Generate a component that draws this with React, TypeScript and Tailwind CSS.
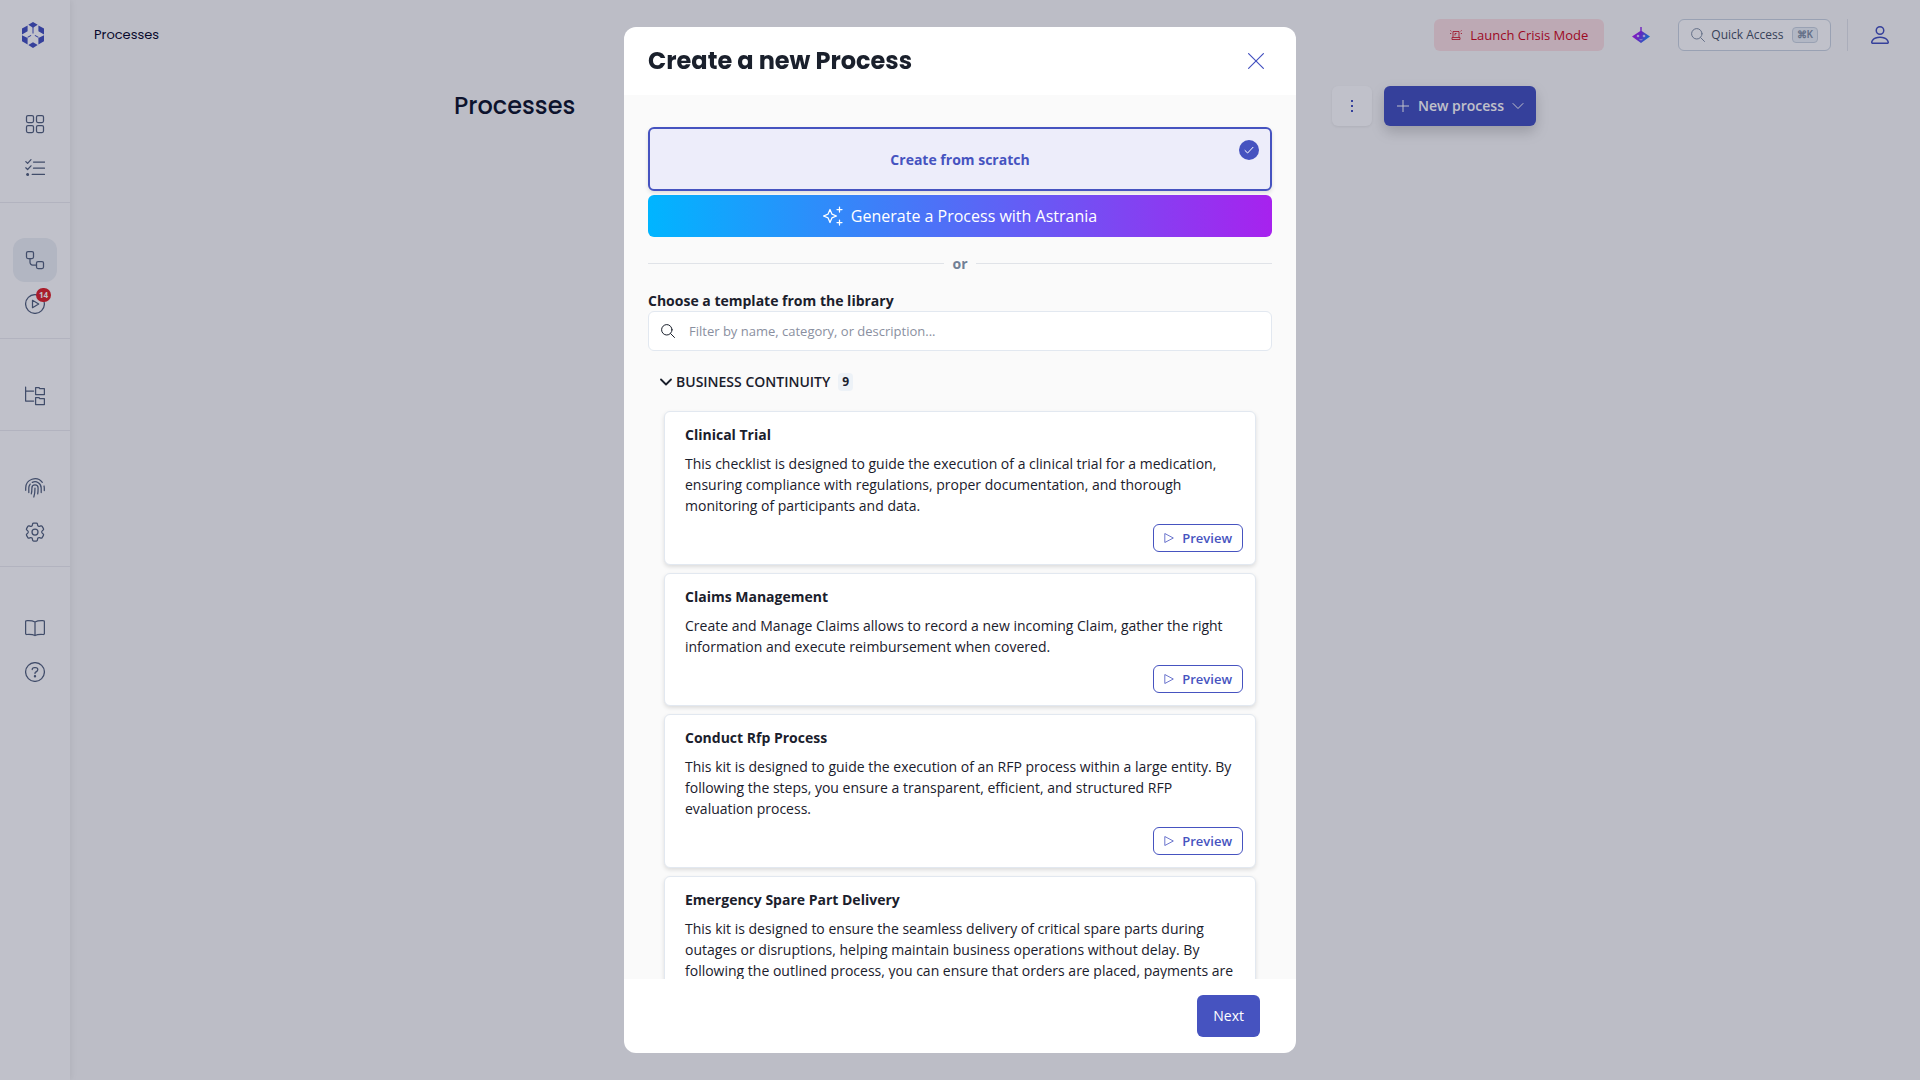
import { useState } from "react";
import type { ReactNode } from "react";
import { BsPerson } from "react-icons/bs";
import { HiOutlineCog6Tooth } from "react-icons/hi2";

interface Template {
    id: string;
    title: string;
    description: string;
}

interface NavItem {
    label: string;
    icon: ReactNode;
    active?: boolean;
    badge?: number;
}

const TEMPLATES: Template[] = [
    {
        id: "clinical-trial",
        title: "Clinical Trial",
        description:
            "This checklist is designed to guide the execution of a clinical trial for a medication, ensuring compliance with regulations, proper documentation, and thorough monitoring of participants and data.",
    },
    {
        id: "claims-management",
        title: "Claims Management",
        description:
            "Create and Manage Claims allows to record a new incoming Claim, gather the right information and execute reimbursement when covered.",
    },
    {
        id: "conduct-rfp",
        title: "Conduct Rfp Process",
        description:
            "This kit is designed to guide the execution of an RFP process within a large entity. By following the steps, you ensure a transparent, efficient, and structured RFP evaluation process.",
    },
    {
        id: "spare-part",
        title: "Emergency Spare Part Delivery",
        description:
            "This kit is designed to ensure the seamless delivery of critical spare parts during outages or disruptions, helping maintain business operations without delay. By following the outlined process, you can ensure that orders are placed, payments are",
    },
];

// Thin line icon on a 20px grid
function LineIcon({ children, className = "size-5" }: { children: ReactNode; className?: string }) {
    return (
        <svg
            viewBox="0 0 20 20"
            className={className}
            fill="none"
            stroke="currentColor"
            strokeWidth="1.25"
            strokeLinecap="round"
            strokeLinejoin="round"
            aria-hidden="true"
        >
            {children}
        </svg>
    );
}

const NAV_GROUPS: NavItem[][] = [
    [
        {
            label: "Dashboard",
            icon: (
                <LineIcon>
                    <rect x="1.5" y="1.5" width="7" height="7" rx="1.5" />
                    <rect x="11.5" y="1.5" width="7" height="7" rx="1.5" />
                    <rect x="1.5" y="11.5" width="7" height="7" rx="1.5" />
                    <rect x="11.5" y="11.5" width="7" height="7" rx="1.5" />
                </LineIcon>
            ),
        },
        {
            label: "Tasks",
            icon: (
                <LineIcon>
                    <path d="M.8 3.6l1.8 1.7L6 1.6M.8 9.8l1.8 1.7L6 7.8M8.5 4h11M8.5 10.2h11M7.2 16.4h12.3" />
                    <circle cx="2.6" cy="16.4" r=".9" fill="currentColor" />
                </LineIcon>
            ),
        },
    ],
    [
        {
            label: "Processes",
            active: true,
            icon: (
                <LineIcon>
                    <rect x="1.5" y="1.5" width="7" height="7" rx="1.5" />
                    <rect x="11.5" y="11.5" width="7" height="7" rx="1.5" />
                    <path d="M5 8.500v3.800A2.700 2.700 0 0 0 7.700 15h3.800" />
                </LineIcon>
            ),
        },
        {
            label: "Runs",
            badge: 14,
            icon: (
                <LineIcon>
                    <circle cx="10" cy="10" r="9.4" />
                    <path d="M7.500 6.300v7.400L13.700 10z" />
                </LineIcon>
            ),
        },
    ],
    [
        {
            label: "Library",
            icon: (
                <LineIcon>
                    <path d="M.6 1v14h8M.6 5h8" />
                    <path d="M10.600 1.500h3.200l1.200 1.200h4.400v5.800h-8.800zM10.600 11.500h3.200l1.200 1.200h4.400v5.800h-8.800z" />
                </LineIcon>
            ),
        },
    ],
    [
        {
            label: "Audit",
            icon: (
                <LineIcon>
                    <path d="M.7 12.300V10A9.300 9.300 0 0 1 17.300 4.300M19.300 12.500V10.300a9 9 0 0 0-.3-2.300" />
                    <path d="M3.800 14.500V10a6.200 6.200 0 0 1 1.400-3.900M7.300 4.400A6.200 6.200 0 0 1 16.200 10v4.500" />
                    <path d="M6.300 15.900c.5-1.500.6-3.200.6-5.900a3.100 3.100 0 0 1 6.200 0c0 2.300 0 4-.4 5.800" />
                    <path d="M10 10c0 3.900-.2 6.200-1.200 9" />
                </LineIcon>
            ),
        },
        { label: "Settings", icon: <HiOutlineCog6Tooth className="size-6" strokeWidth={1.25} aria-hidden="true" /> },
    ],
    [
        {
            label: "Documentation",
            icon: (
                <LineIcon>
                    <path d="M10 4v13.500M10 4C8 2.900 5 2.500 1.800 2.700a1.200 1.200 0 0 0-1.200 1.200V15.300c0 .7.5 1.200 1.200 1.200 3.200-.2 6.200 0 8.200 1 2-1 5-1.200 8.200-1 .7 0 1.200-.5 1.200-1.200V3.900a1.200 1.200 0 0 0-1.200-1.200C15 2.500 12 2.900 10 4z" />
                </LineIcon>
            ),
        },
        {
            label: "Help",
            icon: (
                <LineIcon>
                    <circle cx="10" cy="10" r="9.4" />
                    <path d="M7.200 7.600c0-1.300 1-2.100 2.300-2.100h1c1.300 0 2.300.9 2.300 2.100 0 .9-.5 1.500-1.300 2l-.8.5c-.4.3-.7.6-.7 1.100v.4" />
                    <circle cx="10" cy="14.2" r=".6" fill="currentColor" />
                </LineIcon>
            ),
        },
    ],
];

function SearchIcon({ className }: { className: string }) {
    return (
        <svg viewBox="0 0 14 14" className={className} fill="none" stroke="currentColor" strokeLinecap="round" aria-hidden="true">
            <circle cx="5.8" cy="5.8" r="5.2" />
            <path d="M9.600 9.600l3.900 3.900" />
        </svg>
    );
}

function Logo() {
    return (
        <svg viewBox="0 0 22 26" className="h-[26px] w-[22px] fill-[#4653c0]" aria-hidden="true">
            <path d="M11 0l4.700 2.800L11 5.800 6.300 2.800z" />
            <path d="M10.500 5h1v6.500h-1z" />
            <path d="M5.600 3.400v5.800L0 12.400V6.600zM16.400 3.400v5.800l5.600 3.200V6.600z" />
            <path d="M0 13.200l5.600 2.700v6.500L0 19.200zM22 13.200l-5.600 2.700v6.500l5.600-3.200z" />
            <path d="M11 20.200l4.700 2.900L11 26l-4.700-2.900z" />
            <path d="M5.300 14.900l3.500-2 .6.900-3.600 2zM16.700 14.900l-3.500-2-.6.9 3.600 2z" />
        </svg>
    );
}

function Assistant() {
    return (
        <svg viewBox="0 0 18 16" className="h-4 w-[18px]" aria-hidden="true">
            <defs>
                <linearGradient id="assistant" x1="0" y1="0" x2="1" y2=".4">
                    <stop offset="0" stopColor="#c417f5" />
                    <stop offset=".5" stopColor="#8f2cf0" />
                    <stop offset="1" stopColor="#2389f5" />
                </linearGradient>
            </defs>
            <path fill="url(#assistant)" d="M8.300 0h1.400v4L18 9.500l-5.500 4L9 16l-3.500-2.500L0 9.500 8.300 4z" />
            <circle cx="6" cy="9" r="1.3" fill="#d6ccff" />
            <circle cx="12" cy="9" r="1.3" fill="#d6ccff" />
            <path d="M7.500 12.300q1.500 1.200 3 0" stroke="#d6ccff" strokeWidth=".8" fill="none" />
        </svg>
    );
}

function Sidebar() {
    return (
        <aside className="flex w-[70px] shrink-0 flex-col bg-white text-[#56647f] shadow-[2px_0_6px_rgba(0,0,0,0.06)]">
            <a href="#home" aria-label="Home" className="flex h-[102px] justify-center pt-[22px] pr-1">
                <Logo />
            </a>
            {NAV_GROUPS.map((group, index) => (
                <nav
                    key={index}
                    className="mb-[35px] flex flex-col items-center border-b border-[#ecedf1] pb-3 last:mt-1 last:mb-0 last:border-b-0"
                >
                    {group.map((item) => (
                        <a
                            key={item.label}
                            href={`#${item.label.toLowerCase()}`}
                            aria-label={item.label}
                            className={`relative flex size-11 items-center justify-center rounded-xl ${
                                item.active ? "bg-[#edf0f4]" : ""
                            }`}
                        >
                            {item.icon}
                            {item.badge && (
                                <span className="absolute top-1.5 right-1.5 flex h-3.5 w-[15px] items-center justify-center rounded-full bg-[#e0242b] text-[8px] font-bold text-white">
                                    {item.badge}
                                </span>
                            )}
                        </a>
                    ))}
                </nav>
            ))}
        </aside>
    );
}

function TopBar() {
    return (
        <header className="flex h-[70px] items-center pr-7 pl-6">
            <span className="font-['Poppins','Inter',sans-serif] text-[13px] text-[#0b0b2e]">Processes</span>
            <div className="ml-auto flex items-center">
                <button
                    type="button"
                    className="flex h-8 items-center gap-2 rounded-md bg-[#fbdfe2] px-4 text-[13px] font-medium text-[#d10a1c]"
                >
                    <svg viewBox="0 0 12 12" className="size-3" fill="none" stroke="currentColor" strokeWidth=".8" aria-hidden="true">
                        <path d="M3 8V2.500h6V8M2 8.500h8v2H2zM5 6.500V4.500h1.500M0 4.500h1.200M10.800 4.500H12M.4 1.500l1 .8M11.600 1.500l-1 .8" />
                    </svg>
                    Launch Crisis Mode
                </button>
                <button type="button" aria-label="Assistant" className="mx-7">
                    <Assistant />
                </button>
                <button
                    type="button"
                    className="flex h-8 items-center gap-1.5 rounded-md border border-[#cbd5e0] bg-white px-3 text-xs text-[#4a5568]"
                >
                    <SearchIcon className="size-3.5 text-[#8492a6]" />
                    Quick Access
                    <kbd className="ml-0.5 flex h-4 items-center rounded-sm border border-[#cbd5e0] bg-[#edf2f7] px-1 font-['Noto_Sans',sans-serif] text-[10px] font-semibold text-[#8492a6]">
                        ⌘K
                    </kbd>
                </button>
                <span className="mx-4 h-8 w-px bg-[#e2e4ea]" />
                <button type="button" aria-label="Account" className="ml-1 text-[#4653c0]">
                    <BsPerson className="size-6" aria-hidden="true" />
                </button>
            </div>
        </header>
    );
}

function TemplateCard({ template }: { template: Template }) {
    return (
        <article className="rounded-md border border-[#e2e8f0] bg-white py-3 shadow-[0_2px_4px_rgba(0,0,0,0.12)]">
            <h4 className="px-5 font-bold">{template.title}</h4>
            <p className="mt-2 px-5">{template.description}</p>
            <div className="mt-2 flex justify-end px-3">
                <button
                    type="button"
                    className="flex h-7 items-center gap-2 rounded-md border border-[#4653c0] px-2.5 text-[13px] font-semibold text-[#4653c0]"
                >
                    <svg viewBox="0 0 10 10" className="size-2.5" fill="none" stroke="currentColor" strokeWidth=".8" strokeLinejoin="round" aria-hidden="true">
                        <path d="M.8.500v9L9.300 5z" />
                    </svg>
                    Preview
                </button>
            </div>
        </article>
    );
}

function CreateProcessDialog() {
    const [filter, setFilter] = useState("");
    const [open, setOpen] = useState(true);

    const visible = TEMPLATES.filter((template) =>
        `${template.title} ${template.description}`.toLowerCase().includes(filter.toLowerCase())
    );

    return (
        <div className="fixed inset-0 flex items-center justify-center bg-[#03062b]/25">
            <section
                role="dialog"
                aria-modal="true"
                aria-labelledby="dialog-title"
                className="flex h-[95vh] w-full max-w-2xl flex-col overflow-hidden rounded-xl bg-white text-[#1a202c]"
            >
                {/* Header */}
                <div className="flex h-[68px] shrink-0 items-center justify-between pr-8 pl-6">
                    <h2 id="dialog-title" className="font-['Poppins','Inter',sans-serif] text-2xl font-bold">
                        Create a new Process
                    </h2>
                    <button type="button" aria-label="Close" className="text-[#4653c0]">
                        <svg viewBox="0 0 16 16" className="size-4" stroke="currentColor" strokeWidth="1.2" strokeLinecap="round" aria-hidden="true">
                            <path d="M.6.600l14.800 14.800M15.400.600L.6 15.400" />
                        </svg>
                    </button>
                </div>

                {/* Body */}
                <div className="min-h-0 flex-1 overflow-y-auto bg-[#fafafa] px-6 pt-8 leading-[21px] [scrollbar-width:none]">
                    <button
                        type="button"
                        className="relative h-16 w-full rounded-md border-2 border-[#4653c0] bg-[#ededfa] font-bold text-[#4653c0] shadow-[0_2px_4px_rgba(0,0,0,0.12)]"
                    >
                        Create from scratch
                        <span className="absolute top-[11px] right-[11px] flex size-5 items-center justify-center rounded-full bg-[#4653c0]">
                            <svg viewBox="0 0 10 10" className="size-2.5" fill="none" stroke="white" strokeLinecap="round" aria-hidden="true">
                                <path d="M1 5.500l2.600 2.500L9 2.300" />
                            </svg>
                        </span>
                    </button>
                    <button
                        type="button"
                        className="mt-1 flex h-[42px] w-full items-center justify-center gap-2 rounded-md bg-linear-to-r/srgb from-[#00b5ff] to-[#a722ee] text-base font-medium text-white"
                    >
                        <LineIcon>
                            <path d="M7 3.500l1.900 4.600L13.500 10l-4.600 1.900L7 16.500l-1.900-4.600L.5 10l4.600-1.900zM16.500 1v5M14 3.500h5M16.500 14v5M14 16.500h5" />
                        </LineIcon>
                        Generate a Process with Astrania
                    </button>

                    <div className="my-4 flex items-center gap-2 font-bold text-[#718096]">
                        <span className="h-px flex-1 bg-[#e0e3e8]" />
                        or
                        <span className="h-px flex-1 bg-[#e0e3e8]" />
                    </div>

                    <label htmlFor="template-filter" className="block font-bold">
                        Choose a template from the library
                    </label>
                    <div className="flex h-10 items-center gap-3.5 rounded-md border border-[#e2e8f0] bg-white px-3">
                        <SearchIcon className="size-3.5" />
                        <input
                            id="template-filter"
                            type="text"
                            value={filter}
                            onChange={(event) => setFilter(event.target.value)}
                            placeholder="Filter by name, category, or description..."
                            className="min-w-0 flex-1 text-[13px] outline-none placeholder:text-[#8a8fa0]"
                        />
                    </div>

                    <button
                        type="button"
                        aria-expanded={open}
                        onClick={() => setOpen(!open)}
                        className="mt-5 flex items-center pl-3 font-semibold"
                    >
                        <svg viewBox="0 0 12 12" className="size-3" fill="none" stroke="currentColor" strokeWidth="1.8" strokeLinecap="round" strokeLinejoin="round" aria-hidden="true">
                            <path d="M1 3.500l5 5 5-5" />
                        </svg>
                        <span className="ml-1">BUSINESS CONTINUITY</span>
                        <span className="ml-2 rounded-sm bg-[#edf2f7] px-1 text-xs leading-[18px] font-bold">9</span>
                    </button>

                    {open && (
                        <div className="mx-4 mt-[19px] flex flex-col gap-2">
                            {visible.map((template) => (
                                <TemplateCard key={template.id} template={template} />
                            ))}
                        </div>
                    )}
                </div>

                {/* Footer */}
                <div className="flex shrink-0 justify-end py-4 pr-9">
                    <button type="button" className="h-[42px] rounded-md bg-[#4653c0] px-4 font-medium text-white">
                        Next
                    </button>
                </div>
            </section>
        </div>
    );
}

export default function App() {
    return (
        <div className="flex min-h-screen bg-[#fafafa] font-['Open_Sans',sans-serif] text-sm">
            <Sidebar />
            <div className="min-w-0 flex-1">
                <TopBar />
                <main className="mx-auto mt-4 flex max-w-[1082px] items-center">
                    <h1 className="font-['Poppins','Inter',sans-serif] text-2xl font-medium text-[#10172e]">Processes</h1>
                    <button
                        type="button"
                        aria-label="More actions"
                        className="mr-3 ml-auto flex size-10 items-center justify-center rounded-md bg-white text-[#4653c0] shadow-[0_1px_3px_rgba(0,0,0,0.08)]"
                    >
                        <svg viewBox="0 0 4 14" className="h-3.5 w-1 fill-current" aria-hidden="true">
                            <path d="M1 1h2v2H1zM1 6h2v2H1zM1 11h2v2H1z" />
                        </svg>
                    </button>
                    <button
                        type="button"
                        className="flex h-10 items-center gap-2 rounded-md bg-[#4653c0] px-3 font-semibold text-white shadow-[0_6px_14px_rgba(0,0,0,0.18)]"
                    >
                        <svg viewBox="0 0 14 14" className="size-3.5" stroke="currentColor" aria-hidden="true">
                            <path d="M7 1v12M1 7h12" />
                        </svg>
                        New process
                        <svg viewBox="0 0 12 12" className="size-3" fill="none" stroke="currentColor" strokeLinecap="round" aria-hidden="true">
                            <path d="M1 3.500l5 5 5-5" />
                        </svg>
                    </button>
                </main>
            </div>
            <CreateProcessDialog />
        </div>
    );
}
